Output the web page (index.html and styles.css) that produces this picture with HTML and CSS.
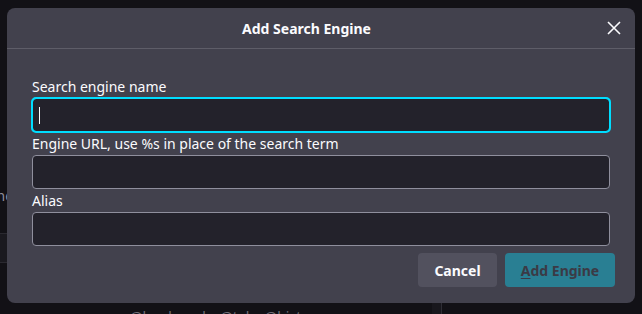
FILE: index.html
```html
<!DOCTYPE html>
<html>
<head>
<meta charset="utf-8">
<link rel="stylesheet" href="styles.css">
</head>
<body>
<div class="page">
  <div class="bg-label">Search Engine</div>
  <div class="bg-row"></div>
  <div class="bg-col"></div>
  <div class="bg-foot">@bookmarks @tabs @history</div>
</div>
<div class="dialog">
  <div class="dlg-head">
    <div class="dlg-title">Add Search Engine</div>
    <button class="close" aria-label="Close">
      <svg width="14" height="14" viewBox="0 0 14 14"><path d="M1 1L13 13M13 1L1 13" stroke="#fbfbfe" stroke-width="1.6" fill="none"/></svg>
    </button>
  </div>
  <div class="dlg-body">
    <label class="lbl">Search engine name</label>
    <div class="field focused"><span class="caret"></span></div>
    <label class="lbl">Engine URL, use %s in place of the search term</label>
    <div class="field"></div>
    <label class="lbl">Alias</label>
    <div class="field"></div>
    <div class="actions">
      <button class="btn cancel">Cancel</button>
      <button class="btn primary"><u>A</u>dd Engine</button>
    </div>
  </div>
</div>
</body>
</html>
```
FILE: styles.css
```css
* { box-sizing: border-box; }
html, body { margin: 0; padding: 0; }
body {
  width: 642px;
  height: 314px;
  overflow: hidden;
  background: #121116;
  font-family: "Noto Sans", "Open Sans", sans-serif;
  color: #fbfbfe;
  position: relative;
}
.page {
  width: 642px;
  height: 314px;
  position: relative;
}
.bg-label {
  position: absolute;
  left: -80px;
  top: 186px;
  font-size: 14px;
  color: #8f8f9d;
}
.bg-row {
  position: absolute;
  left: 0;
  top: 233px;
  width: 20px;
  height: 30px;
  background: #1a191f;
  border-top: 1px solid #2a2930;
  border-bottom: 1px solid #2a2930;
}
.bg-col {
  position: absolute;
  left: 432px;
  top: 290px;
  width: 10px;
  height: 24px;
  background: #18171d;
  border-right: 1px solid #2e2d35;
}
.bg-foot {
  position: absolute;
  left: 130px;
  top: 307px;
  font-size: 14px;
  color: #6f6e78;
}
.dialog {
  position: absolute;
  left: 7px;
  top: 8px;
  width: 628px;
  height: 295px;
  background: #42414d;
  border-radius: 8px;
  display: flex;
  flex-direction: column;
}
.dlg-head {
  height: 41px;
  border-bottom: 1px solid #5e5d68;
  display: flex;
  align-items: center;
  justify-content: center;
  padding-right: 29px;
  position: relative;
}
.dlg-title {
  font-weight: 700;
  font-size: 14px;
}
.close {
  position: absolute;
  right: 14px;
  top: 13px;
  width: 14px;
  height: 14px;
  padding: 0;
  border: 0;
  background: none;
  display: flex;
}
.dlg-body {
  padding: 26px 20px 0 25px;
  display: flex;
  flex-direction: column;
}
.lbl {
  font-size: 14px;
  height: 23px;
  line-height: 23px;
  color: #fbfbfe;
}
.field {
  width: 578px;
  height: 34px;
  background: #23222b;
  border: 1px solid #8f8f9d;
  border-radius: 4px;
  position: relative;
}
.field.focused {
  border-color: #00ddff;
  outline: 2px solid #00ddff;
  outline-offset: -1px;
  border-radius: 4px;
}
.caret {
  position: absolute;
  left: 6px;
  top: 8px;
  width: 1px;
  height: 17px;
  background: #fbfbfe;
}
.actions {
  display: flex;
  justify-content: flex-end;
  gap: 8px;
  margin-top: 7px;
}
.btn {
  height: 34px;
  border: 0;
  border-radius: 4px;
  font-family: inherit;
  font-size: 14px;
  font-weight: 700;
  padding: 0;
}
.cancel {
  width: 79px;
  background: #52515e;
  color: #fbfbfe;
}
.primary {
  width: 110px;
  background: #297f93;
  color: #3b3a45;
}
.primary u { text-decoration-thickness: 1px; text-underline-offset: 2px; }
```
